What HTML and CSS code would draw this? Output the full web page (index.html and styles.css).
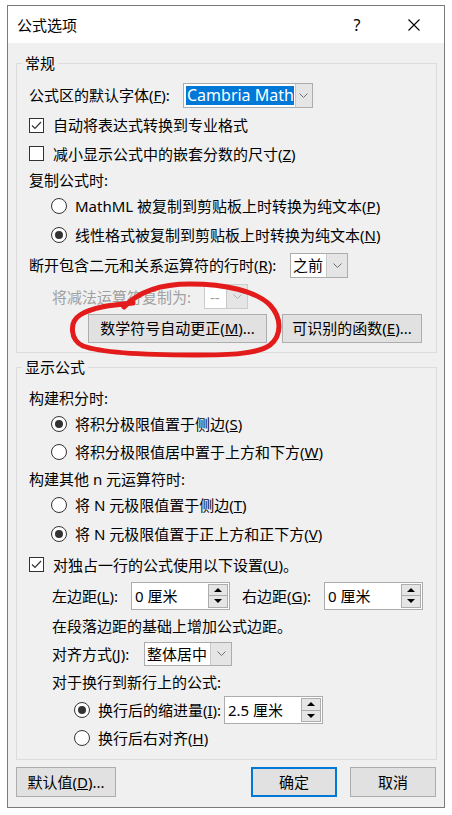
FILE: index.html
```html
<!DOCTYPE html>
<html lang="zh-CN">
<head>
    <meta charset="UTF-8">
    <meta name="viewport" content="width=device-width, initial-scale=1.0">
    <title>公式选项</title>
    <link rel="stylesheet" href="styles.css">
</head>
<body>
    <div class="dialog">
        <div class="titlebar">
            <span class="title">公式选项</span>
            <span class="help">?</span>
            <span class="close">
                <svg width="12" height="12" viewBox="0 0 12 12"><path d="M0.5 0.5 L11.5 11.5 M11.5 0.5 L0.5 11.5" stroke="#000" stroke-width="1.1" fill="none"/></svg>
            </span>
        </div>
        <div class="content">
            <fieldset class="group first">
                <legend>常规</legend>
                <div class="row">
                    <span class="lbl w-font">公式区的默认字体(<u>F</u>):</span>
                    <div class="combo combo-font">
                        <span class="combo-val"><span class="sel">Cambria Math</span></span>
                        <span class="combo-btn"><svg width="9" height="5" viewBox="0 0 9 5"><polyline points="0.5,0.5 4.5,4.5 8.5,0.5" fill="none" stroke="#707070"/></svg></span>
                    </div>
                </div>
                <div class="row">
                    <span class="check"><svg width="13" height="13" viewBox="0 0 13 13"><polyline points="2,6.5 5,9.5 11,3" fill="none" stroke="#333" stroke-width="1.2"/></svg></span>
                    <span>自动将表达式转换到专业格式</span>
                </div>
                <div class="row h27">
                    <span class="check"></span>
                    <span>减小显示公式中的嵌套分数的尺寸(<u>Z</u>)</span>
                </div>
                <div class="row h25">
                    <span>复制公式时:</span>
                </div>
                <div class="row h28 ind1">
                    <span class="radio"></span>
                    <span>MathML 被复制到剪贴板上时转换为纯文本(<u>P</u>)</span>
                </div>
                <div class="row ind1">
                    <span class="radio on"></span>
                    <span>线性格式被复制到剪贴板上时转换为纯文本(<u>N</u>)</span>
                </div>
                <div class="row">
                    <span class="lbl w-break">断开包含二元和关系运算符的行时(<u>R</u>):</span>
                    <div class="combo combo-break">
                        <span class="combo-val">之前</span>
                        <span class="combo-btn"><svg width="9" height="5" viewBox="0 0 9 5"><polyline points="0.5,0.5 4.5,4.5 8.5,0.5" fill="none" stroke="#707070"/></svg></span>
                    </div>
                </div>
                <div class="row h33 ind2 disabled">
                    <span class="lbl w-minus">将减法运算符复制为:</span>
                    <div class="combo combo-minus">
                        <span class="combo-val">--</span>
                        <span class="combo-btn"><svg width="9" height="5" viewBox="0 0 9 5"><polyline points="0.5,0.5 4.5,4.5 8.5,0.5" fill="none" stroke="#b0b0b0"/></svg></span>
                    </div>
                </div>
                <div class="row btn-row">
                    <button class="btn btn-auto">数学符号自动更正(<u>M</u>)...</button>
                    <button class="btn btn-func">可识别的函数(<u>E</u>)...</button>
                </div>
            </fieldset>

            <fieldset class="group second">
                <legend>显示公式</legend>
                <div class="row h24">
                    <span>构建积分时:</span>
                </div>
                <div class="row h28 ind1">
                    <span class="radio on"></span>
                    <span>将积分极限值置于侧边(<u>S</u>)</span>
                </div>
                <div class="row h28 ind1">
                    <span class="radio"></span>
                    <span>将积分极限值居中置于上方和下方(<u>W</u>)</span>
                </div>
                <div class="row h25">
                    <span>构建其他 n 元运算符时:</span>
                </div>
                <div class="row h27 ind1">
                    <span class="radio"></span>
                    <span>将 N 元极限值置于侧边(<u>T</u>)</span>
                </div>
                <div class="row h31 ind1">
                    <span class="radio on"></span>
                    <span>将 N 元极限值置于正上方和正下方(<u>V</u>)</span>
                </div>
                <div class="row h31">
                    <span class="check"><svg width="13" height="13" viewBox="0 0 13 13"><polyline points="2,6.5 5,9.5 11,3" fill="none" stroke="#333" stroke-width="1.2"/></svg></span>
                    <span>对独占一行的公式使用以下设置(<u>U</u>)。</span>
                </div>
                <div class="row h31 ind2">
                    <span class="lbl w-left">左边距(<u>L</u>):</span>
                    <div class="spin">
                        <span class="spin-val">0 厘米</span>
                        <span class="spin-btns">
                            <span class="spin-btn"><svg width="8" height="4" viewBox="0 0 8 4"><polygon points="4,0 8,4 0,4"/></svg></span>
                            <span class="spin-btn"><svg width="8" height="4" viewBox="0 0 8 4"><polygon points="0,0 8,0 4,4"/></svg></span>
                        </span>
                    </div>
                    <span class="lbl w-right">右边距(<u>G</u>):</span>
                    <div class="spin">
                        <span class="spin-val">0 厘米</span>
                        <span class="spin-btns">
                            <span class="spin-btn"><svg width="8" height="4" viewBox="0 0 8 4"><polygon points="4,0 8,4 0,4"/></svg></span>
                            <span class="spin-btn"><svg width="8" height="4" viewBox="0 0 8 4"><polygon points="0,0 8,0 4,4"/></svg></span>
                        </span>
                    </div>
                </div>
                <div class="row h29 ind2">
                    <span>在段落边距的基础上增加公式边距。</span>
                </div>
                <div class="row h27 ind2">
                    <span class="lbl w-align">对齐方式(<u>J</u>):</span>
                    <div class="combo combo-align">
                        <span class="combo-val">整体居中</span>
                        <span class="combo-btn"><svg width="9" height="5" viewBox="0 0 9 5"><polyline points="0.5,0.5 4.5,4.5 8.5,0.5" fill="none" stroke="#707070"/></svg></span>
                    </div>
                </div>
                <div class="row h29 ind2">
                    <span>对于换行到新行上的公式:</span>
                </div>
                <div class="row h28 ind3">
                    <span class="radio on"></span>
                    <span class="lbl w-indent">换行后的缩进量(<u>I</u>):</span>
                    <div class="spin">
                        <span class="spin-val">2.5 厘米</span>
                        <span class="spin-btns">
                            <span class="spin-btn"><svg width="8" height="4" viewBox="0 0 8 4"><polygon points="4,0 8,4 0,4"/></svg></span>
                            <span class="spin-btn"><svg width="8" height="4" viewBox="0 0 8 4"><polygon points="0,0 8,0 4,4"/></svg></span>
                        </span>
                    </div>
                </div>
                <div class="row h28 ind3">
                    <span class="radio"></span>
                    <span>换行后右对齐(<u>H</u>)</span>
                </div>
            </fieldset>
        </div>
        <div class="footer">
            <button class="btn btn-default">默认值(<u>D</u>)...</button>
            <span class="spacer"></span>
            <button class="btn btn-ok">确定</button>
            <button class="btn btn-cancel">取消</button>
        </div>
    </div>

    <svg class="marker" width="452" height="815" viewBox="0 0 452 815">
        <path d="M124 307 C140 290, 165 284, 190 284 C225 284, 256 291, 270 305 C282 318, 282 335, 270 345 C258 354, 230 355, 195 355 C150 355, 102 353, 83 346 C70 340, 69 322, 80 315 C92 307, 112 305, 133 303"
              fill="none" stroke="#e31b1b" stroke-width="5" stroke-linecap="round" stroke-linejoin="round"/>
    </svg>
</body>
</html>
```

FILE: styles.css
```css
* {
    box-sizing: border-box;
}

body {
    margin: 0;
    background: #fff;
    color: #000;
    font-family: "Noto Sans", "Noto Sans CJK SC", sans-serif;
    font-size: 15px;
    line-height: 20px;
}

.dialog {
    width: 438px;
    margin: 5px 0 0 7px;
    border: 1px solid #7a7a7a;
    background: #f0f0f0;
}

.titlebar {
    height: 37px;
    background: #fff;
    display: flex;
    align-items: center;
    padding-left: 9px;
}
.title {
    flex: 1;
}
.help {
    width: 20px;
    margin-right: 41px;
    text-align: center;
    font-size: 16px;
}
.close {
    display: flex;
    margin-right: 24px;
}

.content {
    padding: 10px 7px 0 8px;
}

.group {
    margin: 0;
    min-width: 0;
    border: 1px solid #dcdcdc;
    padding: 7px 0 9px 12px;
}
.group.second {
    margin-top: 4px;
    padding-top: 9px;
    padding-bottom: 7px;
}
.group legend {
    margin-left: -7px;
    padding: 0 3px;
    line-height: 20px;
}

.row {
    display: flex;
    align-items: center;
    height: 30px;
    white-space: nowrap;
}
.h24 { height: 24px; }
.h25 { height: 25px; }
.h27 { height: 27px; }
.h28 { height: 28px; }
.h29 { height: 29px; }
.h31 { height: 31px; }
.h33 { height: 33px; }

.ind1 { padding-left: 22px; }
.ind2 { padding-left: 23px; }
.ind3 { padding-left: 45px; }

.lbl {
    flex: none;
}
.w-font { width: 154px; }
.w-break { width: 261px; }
.w-minus { width: 152px; }
.w-left { width: 79px; }
.w-right { width: 82px; margin-left: 12px; }
.w-align { width: 92px; }
.w-indent { width: 126px; }

.disabled {
    color: #a0a0a0;
}

.check {
    width: 15px;
    height: 15px;
    border: 1px solid #333;
    background: #fff;
    margin-right: 9px;
    display: flex;
    align-items: center;
    justify-content: center;
    flex: none;
}

.radio {
    width: 16px;
    height: 16px;
    border: 1px solid #333;
    border-radius: 50%;
    background: #fff;
    margin-right: 8px;
    display: flex;
    align-items: center;
    justify-content: center;
    flex: none;
}
.radio.on::after {
    content: "";
    width: 8px;
    height: 8px;
    border-radius: 50%;
    background: #333;
}

.combo {
    display: flex;
    height: 25px;
    border: 1px solid #acacac;
    background: #fff;
    flex: none;
}
.combo-val {
    flex: 1;
    display: flex;
    align-items: center;
    padding-left: 2px;
}
.combo-btn {
    width: 21px;
    background: #e5e5e5;
    border-left: 1px solid #c8c8c8;
    display: flex;
    align-items: center;
    justify-content: center;
}
.combo-font { width: 130px; }
.combo-font .combo-val {
    padding: 2px 1px 2px 2px;
}
.sel {
    display: block;
    width: 100%;
    height: 100%;
    background: #0078d7;
    color: #fff;
    font-size: 16px;
    line-height: 19px;
    padding-left: 1px;
}
.combo-break { width: 58px; }
.combo-minus {
    width: 44px;
    border-color: #cccccc;
}
.combo-minus .combo-val {
    padding-left: 5px;
}
.combo-align {
    width: 88px;
    height: 24px;
}

.spin {
    display: flex;
    width: 99px;
    height: 28px;
    border: 1px solid #acacac;
    background: #fff;
    flex: none;
}
.spin-val {
    flex: 1;
    display: flex;
    align-items: center;
    padding-left: 3px;
}
.spin-btns {
    display: flex;
    flex-direction: column;
    width: 20px;
    margin: 1px 1px 1px 0;
    border: 1px solid #adadad;
}
.spin-btn {
    flex: 1;
    display: flex;
    align-items: center;
    justify-content: center;
    background: #e5e5e5;
}
.spin-btn + .spin-btn {
    border-top: 1px solid #adadad;
}

.btn {
    font: inherit;
    color: #000;
    background: #e1e1e1;
    border: 1px solid #adadad;
    border-radius: 0;
    padding: 0;
    height: 30px;
    flex: none;
}
.btn-row .btn {
    height: 29px;
}
.btn-auto {
    width: 179px;
    margin-left: 59px;
}
.btn-func {
    width: 140px;
    margin-left: 15px;
}

.footer {
    display: flex;
    padding: 7px 8px 10px 8px;
}
.spacer {
    flex: 1;
}
.btn-default { width: 100px; }
.btn-ok {
    width: 86px;
    border: 2px solid #0078d7;
}
.btn-cancel {
    width: 86px;
    margin-left: 13px;
}

.marker {
    position: absolute;
    top: 0;
    left: 0;
    pointer-events: none;
}
```
